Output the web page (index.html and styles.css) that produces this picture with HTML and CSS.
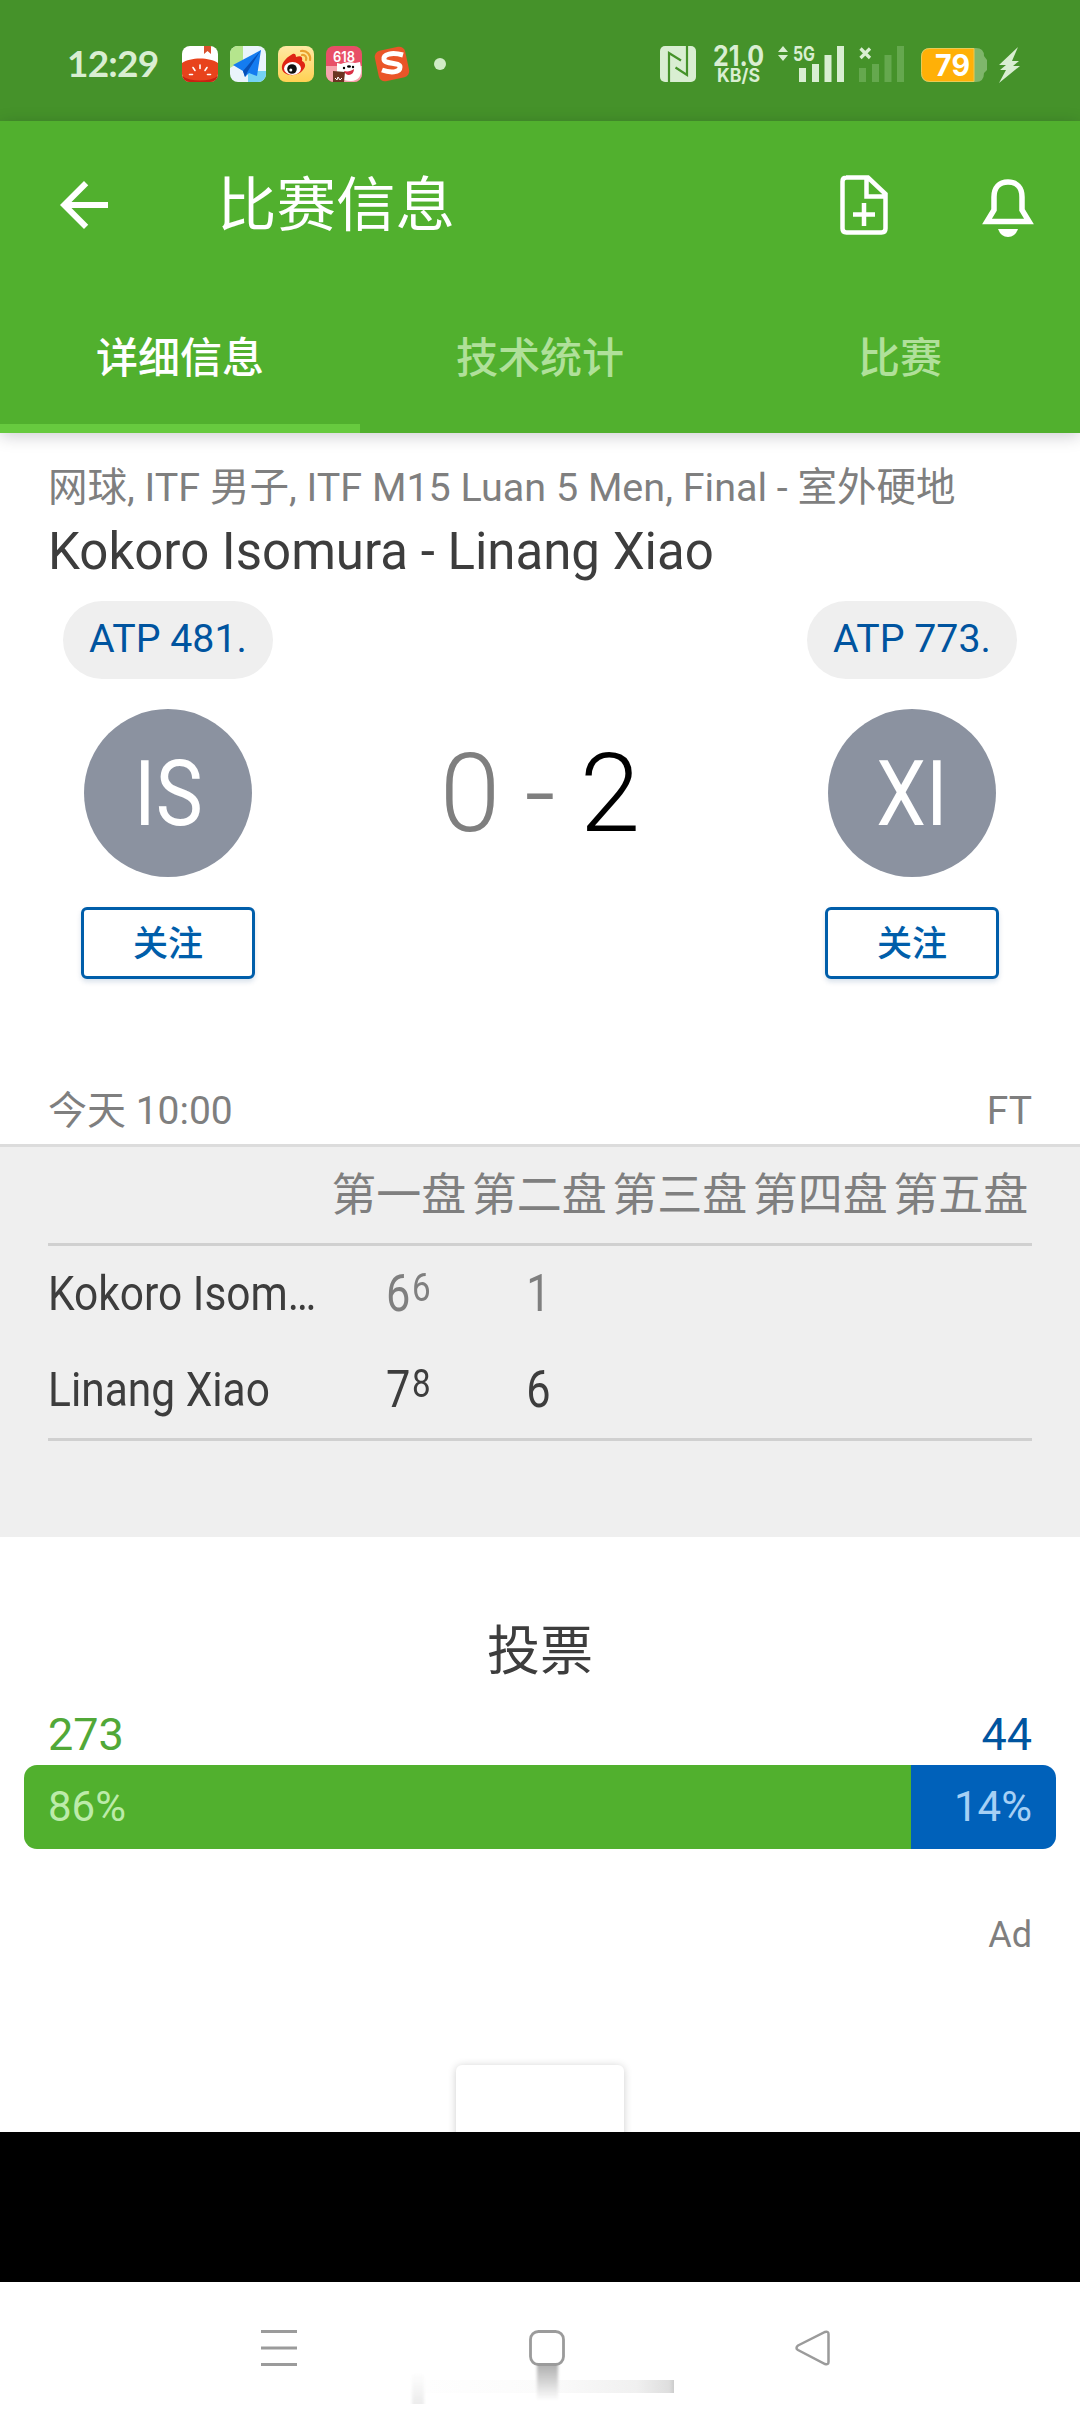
FILE: index.html
```html
<!DOCTYPE html>
<html lang="zh-CN">
<head>
<meta charset="utf-8">
<title>比赛信息</title>
<link rel="stylesheet" href="styles.css">
</head>
<body>
<div class="status">
  <span class="clock">12:29</span>
  <div class="apps">
    <svg viewBox="0 0 36 36"><defs><clipPath id="r"><rect width="36" height="36" rx="8"/></clipPath></defs><g clip-path="url(#r)"><rect width="36" height="36" fill="#fff"/><path d="M22 0h7v8l-3.500-3L22 8z" fill="#d9502c"/><path d="M0 17C8 11 28 11 36 17V36H0z" fill="#e8431c"/><path d="M0 30c9 6 27 6 36 0v6H0z" fill="#c92212"/><path d="M18 19v3.500M11 21.500l2 3M25 21.500l-2 3M7.500 28.500h3M25.500 28.500h3" stroke="#fff" stroke-width="1.600" stroke-linecap="round"/></g></svg>
    <svg viewBox="0 0 36 36"><g clip-path="url(#r)"><rect width="36" height="36" fill="#eaf4fb"/><path d="M0 0h13v14L0 22z" fill="#b5e58d"/><path d="M18 25h18v11H18z" fill="#74d2f4"/><path d="M31 4L3 19l10 6 2 6 4-4 8 3z" fill="#147cf0"/><path d="M31 4L13 25l2 6 3-6z" fill="#0751b8"/></g></svg>
    <svg viewBox="0 0 36 36"><defs><linearGradient id="w" x2="0" y2="1"><stop stop-color="#ffe9a4"/><stop offset="1" stop-color="#ffd153"/></linearGradient></defs><rect width="36" height="36" rx="8" fill="url(#w)"/><path d="M13 9c4-3 5 0 5 2 5-2 7 0 6 4 4 2 4 6 1 9-5 7-19 7-21-1-1-6 4-11 9-14z" fill="#df2414"/><ellipse cx="14.500" cy="22.500" rx="8.500" ry="6.500" fill="#fff"/><circle cx="14" cy="23" r="4.800" fill="#111"/><circle cx="12.800" cy="24" r="1.500" fill="#fff"/><path d="M23 5c6-1 10 4 9 9M24 9c3-.5 5 2 4 5" fill="none" stroke="#e9a02d" stroke-width="2.200" stroke-linecap="round"/></svg>
    <svg viewBox="0 0 36 36"><g clip-path="url(#r)"><rect width="36" height="36" fill="#e84f67"/><rect y="20" width="36" height="16" fill="#f6a5ae"/></g><text x="7" y="15.500" class="promo" textLength="22" lengthAdjust="spacingAndGlyphs">618</text><path d="M11 17l4 1c4-2 10-2 14-1l5-1 1 6c1 8-3 13-10 13-9 0-15-4-14-12z" fill="#fff"/><circle cx="18" cy="22" r="1.200"/><circle cx="27" cy="21" r="1.200"/><ellipse cx="23" cy="20.500" rx="2" ry="1.200"/><path d="M18 25c4 1 7 0 10-2 0 7-8 8-10 2z" fill="#d92f45"/><path d="M7 25l12 1-1 10H7z" fill="#6b3522"/><path d="M9 32l2 2 1-3 2 3 2-2" fill="none" stroke="#fff"/></svg>
    <svg viewBox="0 0 36 36"><rect x="2.500" y="2.500" width="31" height="31" rx="6" fill="#ea5528" transform="rotate(-12 18 18)"/><path d="M29 9C18 6 9 8 10 13.500c1 5 16 2.500 16 7.500 0 6-10 6-18 3" fill="none" stroke="#fff" stroke-width="5"/></svg>
    <i class="dot"></i>
  </div>
  <svg class="signals" viewBox="0 0 370 40">
    <rect x="0" y="1" width="36" height="36" rx="5" fill="#d9eed2"/>
    <path d="M9 37V8l12 7.500M27 1v29l-11.500-7.500" fill="none" stroke="#45922a" stroke-width="2.200"/>
    <text x="53" y="21" class="speed" textLength="51" lengthAdjust="spacingAndGlyphs">21.0</text>
    <text x="57" y="37" class="unit" textLength="43" lengthAdjust="spacingAndGlyphs">KB/S</text>
    <path d="M118 7l5-6 5 6zM118 10h10l-5 6z" fill="#d9eed2"/>
    <text x="133" y="16" class="net" textLength="22" lengthAdjust="spacingAndGlyphs">5G</text>
    <path d="M139 23h7v14h-7zM152 19h7v18h-7zM164.500 10h7v27h-7zM177 1h7v36h-7z" fill="#d9eed2"/>
    <path d="M199 23h7v14h-7zM212 19h7v18h-7zM224.500 10h7v27h-7zM237 1h7v36h-7z" fill="#65a84e"/>
    <path d="M200.500 3.500l9.500 9.500M210 3.500l-9.500 9.500" stroke="#d9eed2" stroke-width="3.200"/>
    <path d="M270 3h46q8 0 8 8l3 4v10l-3 3q0 9-8 9h-46q-9 0-9-9V12q0-9 9-9z" fill="#7fb66b"/>
    <path d="M270 3.500h44v33h-44q-8.500 0-8.500-9V12q0-8.500 8.500-8.500z" fill="#ffb007" stroke="#e9cb55"/>
    <text x="275" y="31" class="charge" textLength="35" lengthAdjust="spacingAndGlyphs">79</text>
    <path d="M358 2l-19 18h7l-6 5h6l-7 13 21-17h-7l6-5h-7z" fill="#d9eed2"/>
  </svg>
</div>
<header class="header">
  <div class="toolbar">
    <svg class="back" viewBox="0 0 24 24"><path d="M20 11H7.830l5.590-5.590L12 4l-8 8 8 8 1.410-1.410L7.830 13H20z" fill="#fff"/></svg>
    <h1 class="title">比赛信息</h1>
    <svg class="add" viewBox="0 0 48 60"><path d="M6 2.500h22L45.500 19v34.500q0 4-4 4H6.500q-4 0-4-4v-47q0-4 4-4zM26.500 2.500v19h19M24 28v23M13 39.500h22" fill="none" stroke="#fff" stroke-width="4.500"/></svg>
    <svg class="bell" viewBox="0 0 50 58"><path d="M4 42.500L11 31V18C11 9 16 3 25 3s14 6 14 15v13l7 11.500z" fill="none" stroke="#fff" stroke-width="5.500"/><path d="M15 50h20q-3 8-10 8t-10-8z" fill="#fff"/></svg>
  </div>
  <nav class="tabs"><span class="tab on">详细信息</span><span class="tab">技术统计</span><span class="tab">比赛</span></nav>
</header>
<main class="match">
  <p class="league">网球, ITF 男子, ITF M15 Luan 5 Men, Final - 室外硬地</p>
  <h2 class="pair">Kokoro Isomura - Linang Xiao</h2>
  <div class="duel">
    <div class="player"><span class="rank">ATP 481.</span><div class="avatar"><span>IS</span></div><button class="follow">关注</button></div>
    <div class="score"><span>0</span><span class="dash">-</span><span class="won">2</span></div>
    <div class="player"><span class="rank">ATP 773.</span><div class="avatar"><span>XI</span></div><button class="follow">关注</button></div>
  </div>
  <div class="when"><span>今天 10:00</span><span>FT</span></div>
</main>
<section class="sets">
  <div class="row head"><span></span><span>第一盘</span><span>第二盘</span><span>第三盘</span><span>第四盘</span><span>第五盘</span></div>
  <div class="row lost"><span class="name"><b>Kokoro Isom…</b></span><span class="pts tie"><b>6</b><sup>6</sup></span><span class="pts"><b>1</b></span></div>
  <div class="row win"><span class="name"><b>Linang Xiao</b></span><span class="pts tie"><b>7</b><sup>8</sup></span><span class="pts"><b>6</b></span></div>
  <hr class="rule">
</section>
<section class="vote">
  <h3 class="vote-title">投票</h3>
  <div class="counts"><span class="home">273</span><span class="away">44</span></div>
  <div class="bar"><span class="bar-home">86%</span><span class="bar-away">14%</span></div>
  <div class="ad">Ad</div>
  <div class="card"></div>
</section>
<div class="banner"></div>
<footer class="nav">
  <svg viewBox="0 0 1080 132">
    <defs>
      <linearGradient id="g1" x2="0" y2="1"><stop stop-color="#b0b0b0"/><stop offset="1" stop-color="#fff"/></linearGradient>
      <linearGradient id="g2"><stop stop-color="#fefefe"/><stop offset=".5" stop-color="#fbfbfb"/><stop offset=".85" stop-color="#f0f0f0"/><stop offset=".98" stop-color="#dedede"/><stop offset="1" stop-color="#ccc"/></linearGradient>
      <linearGradient id="g3" x2="0" y2="1"><stop stop-color="#fff"/><stop offset="1" stop-color="#ececec"/></linearGradient>
      <filter id="soft"><feGaussianBlur stdDeviation="1.500 0"/></filter>
    </defs>
    <rect x="425" y="98" width="249" height="13" fill="url(#g2)"/>
    <rect x="412" y="90" width="12" height="32" fill="url(#g3)" filter="url(#soft)"/>
    <rect x="537" y="83" width="21" height="36" fill="url(#g1)" filter="url(#soft)"/>
    <path d="M261 49.500h36M261 66h36M261 82.500h36" stroke="#9b9b9b" stroke-width="3"/>
    <rect x="530.500" y="49.500" width="33" height="33" rx="8" fill="#fff" stroke="#9b9b9b" stroke-width="2.800"/>
    <path d="M798 63.500L825 50q3.500-1 3.500 2v28q0 3-3.500 2L798 68q-3-2 0-4.500z" fill="none" stroke="#9b9b9b" stroke-width="2.500"/>
  </svg>
</footer>
</body>
</html>
```
FILE: styles.css
```css
* { box-sizing: border-box; margin: 0; padding: 0; }
body { width: 1080px; height: 2414px; overflow: hidden; background: #fff; color: #7f7f7f; font-family: Roboto, "Noto Sans CJK SC", sans-serif; font-weight: 400; }
svg { display: block; overflow: visible; }
.status { height: 121px; background: #45922a; display: flex; align-items: center; padding: 0 50px 0 67px; }
.clock { font: 700 37px/44px Lato, sans-serif; letter-spacing: -.8px; width: 115px; color: #d9eed2; white-space: nowrap; margin-top: 4px; }
.apps { display: flex; align-items: center; gap: 12px; margin-top: 7px; }
.apps svg { width: 36px; height: 36px; }
.dot { width: 12px; height: 12px; border-radius: 50%; background: #d0ebc6; margin-left: 12px; }
.signals { width: 370px; height: 40px; margin-left: auto; margin-top: 8px; }
.signals text { font-family: Inter, sans-serif; font-weight: 700; fill: #d9eed2; }
.signals .speed { font-size: 28px; }
.signals .unit { font-size: 18.500px; }
.signals .net { font-size: 20.500px; }
.signals .charge { font-size: 30px; fill: #fff; }
.promo { font: 600 15px Inter, sans-serif; fill: #fff; }

.header { height: 312px; background: #51b02e; color: #fff; box-shadow: 0 3px 16px rgba(0,0,30,.2); position: relative; display: flex; flex-direction: column; }
.toolbar { height: 168px; display: flex; align-items: center; padding: 0 47px 0 48px; }
.back { width: 72px; height: 72px; }
.title { font-size: 59.500px; font-weight: 400; line-height: 72px; margin-left: 97px; padding-top: 1px; }
.add { width: 48px; height: 60px; margin-left: auto; }
.bell { width: 50px; height: 58px; margin-left: 95px; margin-top: 6px; }
.tabs { flex: 1; display: grid; grid-template-columns: repeat(3, 1fr); }
.tab { display: flex; align-items: center; justify-content: center; font-size: 42px; font-weight: 500; color: #b0e09a; padding-bottom: 14px; }
.tab.on { color: #fff; border-bottom: 9px solid #67ca3f; padding-bottom: 5px; }

.match { height: 711px; padding: 27px 48px 0; display: flex; flex-direction: column; }
.league { font-size: 39.500px; line-height: 56px; white-space: nowrap; }
.pair { font-size: 51px; line-height: 72px; font-weight: 400; color: #3d3d3d; white-space: nowrap; margin-bottom: 13px; }
.duel { display: flex; justify-content: space-between; height: 378px; padding: 0 15px; }
.player { width: 210px; display: flex; flex-direction: column; align-items: center; }
.rank { width: 210px; height: 78px; border-radius: 39px; background: #efefef; color: #00549f; font-size: 39.300px; line-height: 77px; text-align: center; }
.avatar { width: 168px; height: 168px; border-radius: 50%; background: #8b92a0; color: #fff; margin: 30px 0; display: flex; align-items: center; justify-content: center; }
.avatar span { font-size: 91px; transform: scaleX(.87); padding-top: 2px; }
.follow { width: 174px; height: 72px; border: 3px solid #005eaa; border-radius: 6px; background: #fff; color: #005eaa; font: 500 35px "Noto Sans CJK SC", sans-serif; box-shadow: 0 3px 5px rgba(0,60,120,.15); padding-bottom: 5px; }
.score { display: flex; justify-content: center; padding-top: 129px; font-size: 109px; line-height: 128px; font-weight: 300; }
.score span { width: 70px; text-align: center; }
.score .won { color: #000; }
.when { display: flex; justify-content: space-between; margin-top: auto; font-size: 39px; line-height: 66px; }

.sets { height: 393px; background: #efefef; border-top: 3px solid #dcdcdc; padding: 0 48px; }
.row { display: grid; grid-template-columns: 281px repeat(5, 140.500px); }
.head { height: 99px; border-bottom: 3px solid #d0d0d0; font-size: 45px; line-height: 98px; text-align: center; white-space: nowrap; }
.head span { height: 96px; margin-left: -1px; }
.lost, .win { height: 96px; line-height: 96px; font-size: 49px; }
.row b { font-weight: 400; display: inline-block; }
.name { color: #3d3d3d; }
.name b { transform: scaleX(.867); transform-origin: 0 50%; white-space: nowrap; }
.pts { display: flex; justify-content: center; padding-right: 3px; }
.tie { justify-content: flex-start; padding: 0 0 0 57px; }
.win .pts { color: #3d3d3d; }
.pts b { transform: scaleX(.85); font-size: 51px; }
.tie b { width: 26px; transform-origin: 0 50%; }
.pts sup { font-size: 39px; line-height: 85px; transform: scaleX(.85); transform-origin: 0 50%; vertical-align: baseline; }
.rule { border: 0; height: 3px; background: #d0d0d0; }

.vote { height: 595px; padding: 75px 24px 0; display: flex; flex-direction: column; overflow: hidden; }
.vote > * { flex: none; }
.vote-title { font-size: 53px; line-height: 80px; font-weight: 400; color: #3d3d3d; text-align: center; }
.counts { display: flex; justify-content: space-between; padding: 0 24px; font-size: 45px; line-height: 60px; margin-top: 13px; }
.home { color: #51a838; }
.away { color: #00549f; }
.bar { height: 84px; display: flex; border-radius: 13px; overflow: hidden; font-size: 42px; line-height: 84px; }
.bar-home { width: 887px; background: #51b02e; color: #bcebaa; padding-left: 24px; }
.bar-away { flex: 1; background: #0061ba; color: #a6d0f5; text-align: right; padding-right: 24px; }
.ad { text-align: right; padding-right: 24px; font-size: 36px; line-height: 48px; margin-top: 62px; }
.card { width: 168px; height: 100px; margin: 106px auto 0; border-radius: 6px; background: #fff; box-shadow: 0 1px 9px rgba(0,0,0,.2); }
.banner { height: 150px; background: #000; }
.nav { height: 132px; background: #fff; }
```
